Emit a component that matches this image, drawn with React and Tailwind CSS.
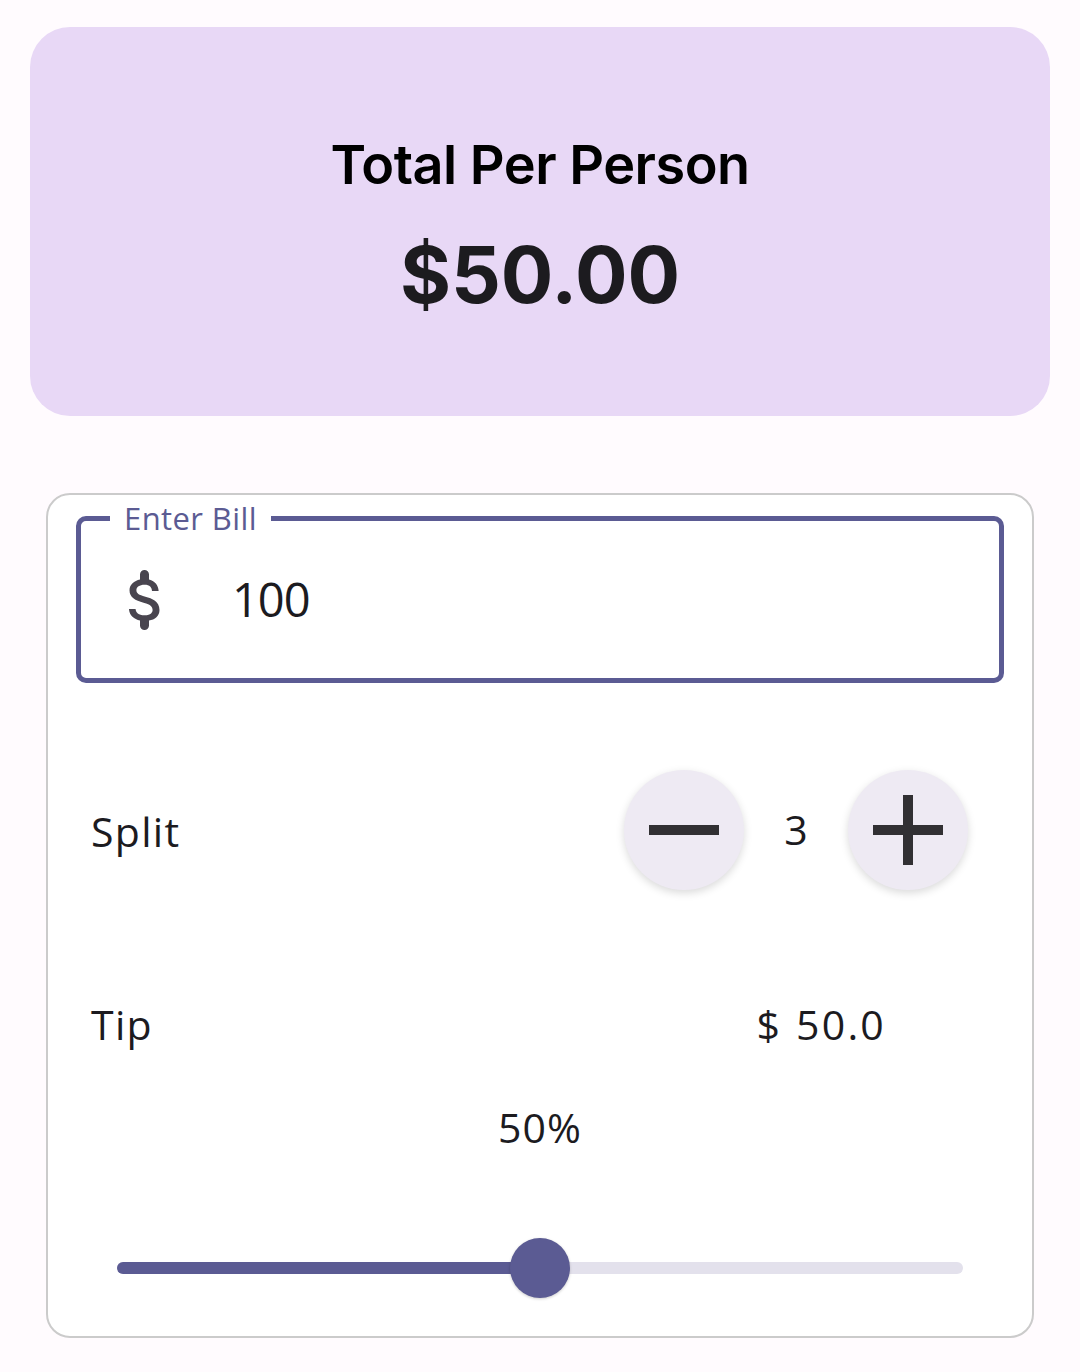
import React from "react";

function DollarIcon({ className }) {
  return (
    <svg viewBox="0 0 24 24" className={className} fill="currentColor">
      <path d="M11.8 10.9c-2.27-.59-3-1.2-3-2.15 0-1.09 1.01-1.850 2.7-1.85 1.78 0 2.44.85 2.5 2.1h2.21c-.07-1.72-1.12-3.3-3.21-3.81V3.5a1.5 1.5 0 0 0-3 0v1.66c-1.94.42-3.5 1.68-3.5 3.61 0 2.31 1.91 3.46 4.7 4.13 2.5.6 3 1.48 3 2.41 0 .69-.49 1.79-2.7 1.79-2.06 0-2.87-.92-2.98-2.1h-2.2c.12 2.19 1.76 3.420 3.68 3.83v1.67a1.5 1.5 0 0 0 3 0v-1.65c1.95-.37 3.5-1.5 3.5-3.55 0-2.84-2.430-3.81-4.7-4.4z" />
    </svg>
  );
}

export default function App() {
  const body = { fontFamily: "'Open Sans', Roboto, sans-serif" };
  return (
    <div className="min-h-[1372px] w-[1080px] bg-[#FFFBFE] pt-[27px]" style={body}>
      {/* Top summary card */}
      <div className="mx-[30px] h-[389px] rounded-[40px] bg-[#E8D8F6] flex flex-col items-center justify-center">
        <div
          className="text-[54px] font-semibold leading-none text-black tracking-[-0.5px] mt-[8px]"
          style={{ fontFamily: "Inter, Roboto, sans-serif" }}
        >
          Total Per Person
        </div>
        <div
          className="mt-[44px] text-[78px] font-bold leading-none text-[#1C1B1F]"
          style={{ fontFamily: "Inter, Roboto, sans-serif" }}
        >
          $50.00
        </div>
      </div>

      {/* Main card */}
      <div className="mx-[46px] mt-[77px] rounded-[24px] border-2 border-[#CBCBCB] bg-white px-[28px] pt-[21px] pb-[38px]">
        {/* Text field */}
        <div className="relative h-[167px] rounded-[10px] border-[5px] border-[#5B5B93] flex items-center">
          <div className="absolute left-[29px] top-[-23px] bg-white px-[14px] text-[31px] leading-[40px] tracking-[0.4px] text-[#5B5B93]">
            Enter Bill
          </div>
          <DollarIcon className="ml-[29px] w-[72px] h-[72px] text-[#49454F]" />
          <div className="ml-[50px] text-[47px] leading-none text-[#1C1B1F] tracking-[-1px]">100</div>
        </div>

        {/* Split row */}
        <div className="mt-[87px] flex h-[120px] items-center justify-between pl-[15px] pr-[36px]">
          <div className="text-[41px] text-[#1C1B1F] tracking-[1.3px] mt-[4px]">Split</div>
          <div className="flex items-center">
            <button className="flex h-[120px] w-[120px] items-center justify-center rounded-full bg-[#EEEAF3] shadow-[0_3px_8px_rgba(0,0,0,0.15)]">
              <div className="h-[10px] w-[70px] bg-[#313033]" />
            </button>
            <div className="w-[104px] text-center text-[41px] text-[#1C1B1F]">3</div>
            <button className="relative flex h-[120px] w-[120px] items-center justify-center rounded-full bg-[#EEEAF3] shadow-[0_3px_8px_rgba(0,0,0,0.15)]">
              <div className="h-[10px] w-[70px] bg-[#313033]" />
              <div className="absolute h-[70px] w-[10px] bg-[#313033]" />
            </button>
          </div>
        </div>

        {/* Tip row */}
        <div className="mt-[111px] flex h-[48px] items-center justify-between pl-[15px] pr-[118px]">
          <div className="text-[41px] text-[#1C1B1F] tracking-[1.3px]">Tip</div>
          <div className="flex text-[41px] text-[#1C1B1F] tracking-[2.2px]">
            <span>$</span>
            <span className="ml-[14px]">50.0</span>
          </div>
        </div>

        {/* Percent */}
        <div className="mt-[55px] h-[48px] flex items-center justify-center text-[41px] tracking-[1px] text-[#1C1B1F]">
          50%
        </div>

        {/* Slider */}
        <div className="mt-[86px] mx-[41px] relative h-[60px] flex items-center">
          <div className="h-[12px] w-full rounded-full bg-[#E3E1EC] flex">
            <div className="h-full w-1/2 rounded-full bg-[#5B5B93]" />
          </div>
          <div className="absolute left-1/2 top-0 h-[60px] w-[60px] -translate-x-1/2 rounded-full bg-[#5B5B93] shadow-[0_1px_3px_rgba(0,0,0,0.2)]" />
        </div>
      </div>
    </div>
  );
}
